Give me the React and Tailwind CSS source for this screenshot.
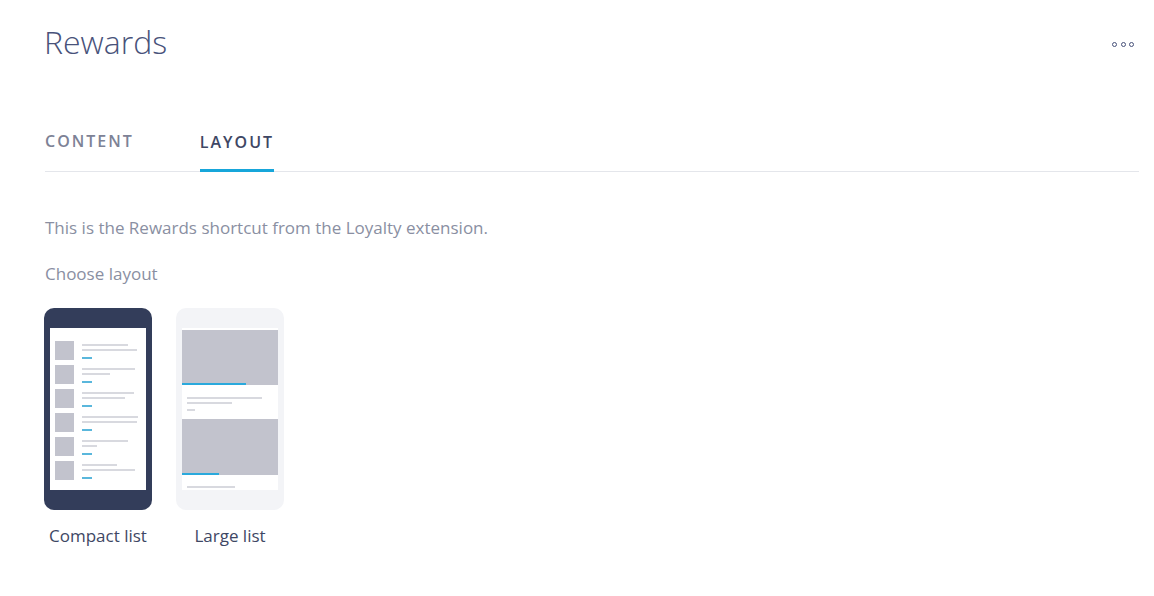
const compactRows = [
  [46, 55],
  [53, 28],
  [52, 43],
  [56, 55],
  [46, 15],
  [35, 53],
];

function CompactPreview() {
  return (
    <div className="w-[108px] h-[202px] rounded-[10px] bg-[#333d5a] pt-[20px] px-[6px]">
      <div className="h-[162px] bg-white pt-[13px] pl-[5px] flex flex-col gap-[5px]">
        {compactRows.map(([a, b], i) => (
          <div key={i} className="flex gap-[8px]">
            <div className="w-[19px] h-[19px] bg-[#c2c3cd]" />
            <div className="pt-[3px] flex flex-col">
              <div className="h-[2px] bg-[#d8d9df]" style={{ width: a }} />
              <div className="h-[2px] mt-[3px] bg-[#d8d9df]" style={{ width: b }} />
              <div className="h-[2px] mt-[6px] w-[10px] bg-[#5ab7dc]" />
            </div>
          </div>
        ))}
      </div>
    </div>
  );
}

function LargePreview() {
  return (
    <div className="w-[108px] h-[202px] rounded-[10px] bg-[#f3f4f7] pt-[20px] px-[6px]">
      <div className="h-[162px] bg-white pt-[2px] flex flex-col">
        <div className="h-[53px] bg-[#c2c3cd]" />
        <div className="h-[2px] bg-[#c2c3cd]">
          <div className="h-[2px] w-[64px] bg-[#2aa9dc]" />
        </div>
        <div className="h-[34px] pl-[5px] pt-[12px] flex flex-col">
          <div className="h-[2px] w-[75px] bg-[#d8d9df]" />
          <div className="h-[2px] mt-[3px] w-[45px] bg-[#d8d9df]" />
          <div className="h-[2px] mt-[5px] w-[8px] bg-[#d8d9df]" />
        </div>
        <div className="h-[54px] bg-[#c2c3cd]" />
        <div className="h-[2px] bg-[#c2c3cd]">
          <div className="h-[2px] w-[37px] bg-[#2aa9dc]" />
        </div>
        <div className="pl-[5px] pt-[11px]">
          <div className="h-[2px] w-[48px] bg-[#d8d9df]" />
        </div>
      </div>
    </div>
  );
}

export default function App() {
  return (
    <div className="w-[1154px] h-[596px] bg-white pl-[45px] pr-[15px] font-['Open_Sans',sans-serif]">
      <div className="flex justify-between items-start pt-[20px]">
        <h1 className="text-[32px] leading-[44px] font-light text-[#48527a] -ml-[1px]">Rewards</h1>
        <div className="flex gap-[3.5px] mt-[22px] mr-[5px]">
          <span className="w-[5px] h-[5px] rounded-full border-[1.4px] border-[#48527a]" />
          <span className="w-[5px] h-[5px] rounded-full border-[1.4px] border-[#48527a]" />
          <span className="w-[5px] h-[5px] rounded-full border-[1.4px] border-[#48527a]" />
        </div>
      </div>

      <div className="mt-[67px] flex gap-[66px] border-b border-[#e4e6eb]">
        <button className="pb-[17px] text-[16px] leading-[20px] tracking-[2px] font-semibold text-[#7d8296] border-b-[3px] border-transparent">
          CONTENT
        </button>
        <button className="pb-[17px] text-[16px] leading-[20px] tracking-[2px] font-semibold text-[#3e4764] border-b-[3px] border-[#17a6da] -mb-px">
          LAYOUT
        </button>
      </div>

      <p className="mt-[45px] text-[17px] leading-[22px] text-[#8a8fa2]">
        This is the Rewards shortcut from the Loyalty extension.
      </p>
      <p className="mt-[24px] text-[17px] leading-[22px] text-[#8a8fa2]">Choose layout</p>

      <div className="mt-[23px] flex gap-[24px] -ml-[1px]">
        <div className="flex flex-col items-center">
          <CompactPreview />
          <span className="mt-[15px] text-[17px] leading-[22px] text-[#3e4764]">Compact list</span>
        </div>
        <div className="flex flex-col items-center">
          <LargePreview />
          <span className="mt-[15px] text-[17px] leading-[22px] text-[#3e4764]">Large list</span>
        </div>
      </div>
    </div>
  );
}
